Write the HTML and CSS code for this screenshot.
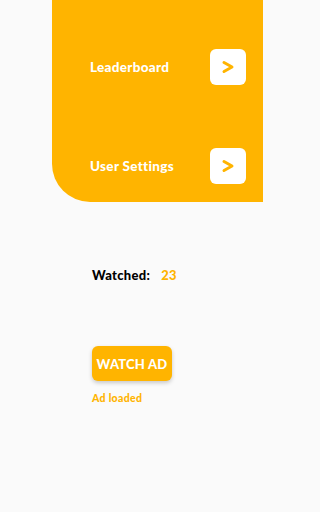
FILE: index.html
```html
<!DOCTYPE html>
<html>
<head>
<meta charset="utf-8">
<link rel="stylesheet" href="styles.css">
</head>
<body>
<div class="page">
<div class="panel">
  <div class="row">
    <span class="row-label">Leaderboard</span>
    <button class="go-btn" aria-label="Open leaderboard">
      <svg width="14" height="14" viewBox="0 0 14 14"><path d="M3 2.5 L11 7 L3 11.5" fill="none" stroke="#FFB400" stroke-width="3" stroke-linecap="round" stroke-linejoin="round"/></svg>
    </button>
  </div>
  <div class="row">
    <span class="row-label">User Settings</span>
    <button class="go-btn" aria-label="Open user settings">
      <svg width="14" height="14" viewBox="0 0 14 14"><path d="M3 2.5 L11 7 L3 11.5" fill="none" stroke="#FFB400" stroke-width="3" stroke-linecap="round" stroke-linejoin="round"/></svg>
    </button>
  </div>
</div>
<div class="content">
  <div class="watched">
    <span class="watched-label">Watched:</span>
    <span class="watched-count">23</span>
  </div>
  <button class="watch-btn">WATCH AD</button>
  <div class="status">Ad loaded</div>
</div>
</div>
</body>
</html>
```
FILE: styles.css
```css
html, body {
  margin: 0;
  padding: 0;
  background: #fafafa;
  font-family: Lato, "Open Sans", sans-serif;
}
.page {
  width: 263px;
}
.panel {
  margin-left: 52px;
  height: 202px;
  box-sizing: border-box;
  background: #ffb400;
  border-bottom-left-radius: 38px;
  padding: 49px 17px 0 38px;
  display: flex;
  flex-direction: column;
  gap: 63px;
}
.row {
  display: flex;
  align-items: center;
  justify-content: space-between;
  height: 36px;
}
.row-label {
  color: #fff;
  font-weight: 900;
  font-size: 13.5px;
  letter-spacing: 0.3px;
}
.go-btn {
  width: 36px;
  height: 36px;
  border: none;
  border-radius: 6px;
  background: #fff;
  padding: 0;
  display: flex;
  align-items: center;
  justify-content: center;
}
.content {
  padding-left: 92px;
  display: flex;
  flex-direction: column;
  align-items: flex-start;
}
.watched {
  margin-top: 65px;
  display: flex;
  gap: 11px;
  font-weight: 900;
  font-size: 13px;
  line-height: 16px;
  letter-spacing: 0.3px;
}
.watched-label { color: #000; }
.watched-count { color: #ffb400; }
.watch-btn {
  margin-top: 63px;
  width: 80px;
  height: 35px;
  border: none;
  border-radius: 6px;
  background: #ffb400;
  color: #fff;
  font-family: Lato, "Open Sans", sans-serif;
  font-weight: 900;
  font-size: 13px;
  letter-spacing: 0.2px;
  padding: 0;
  box-shadow: 0 2px 4px rgba(0,0,0,0.2);
}
.status {
  margin-top: 11px;
  color: #ffb400;
  font-weight: 900;
  font-size: 10.5px;
  line-height: 12px;
  letter-spacing: 0.3px;
}
```
